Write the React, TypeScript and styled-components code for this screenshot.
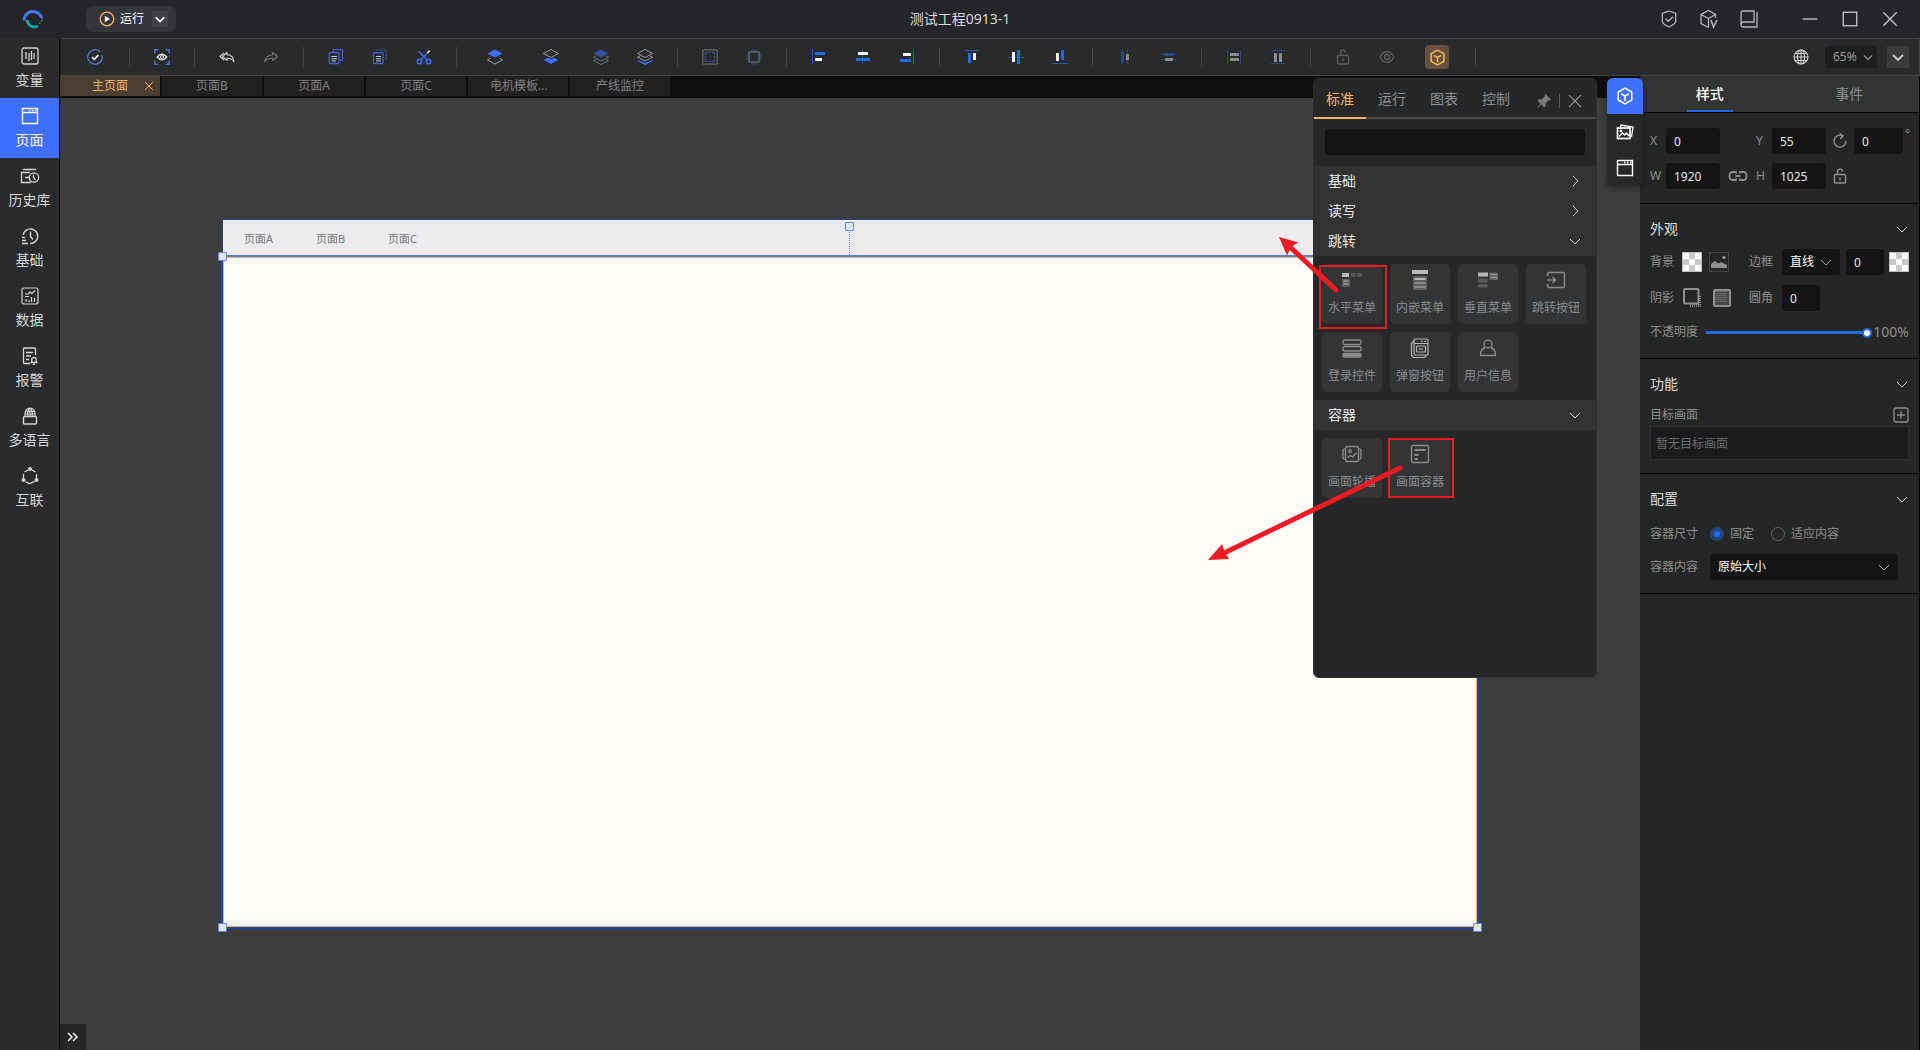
import React, { useState } from "react";
import styled, { createGlobalStyle, css } from "styled-components";

const color = {
  title: "#25252a",
  bar: "#282a2b",
  side: "#2a2b2d",
  panel: "#252726",
  palette: "#262728",
  field: "#141414",
  stage: "#3d3d3d",
  line: "#434444",
  blue: "#3f6fff",
  accent: "#1f6bf0",
  orange: "#ffb464",
  text: "#e3e3e3",
  muted: "#8f8f8f",
  red: "#ed1c24",
};

const GlobalStyle = createGlobalStyle`
  * { box-sizing: border-box; }
  body { margin: 0; background: ${color.stage}; }
  body, button, input, select {
    font-family: "Noto Sans", "Noto Sans CJK SC", sans-serif;
    font-size: 12px;
    line-height: 20px;
  }
  button, input, select { margin: 0; padding: 0; border: 0; background: none; color: inherit; }
  svg { display: block; flex: none; }
`;

/* ---------- icons ---------- */

const Svg = ({ size = 16, box = 16, children, stroke = "currentColor", w = 1 }: any) => (
  <svg width={size} height={size} viewBox={`0 0 ${box} ${box}`} fill="none" stroke={stroke} strokeWidth={w} aria-hidden="true">
    {children}
  </svg>
);

const Chevron = ({ dir = "down", size = 12, w = 1 }: { dir?: "down" | "right"; size?: number; w?: number }) => (
  <Svg size={size} box={12} w={w}>
    <path d={dir === "down" ? "M1 4l5 5 5-5" : "M4 1l5 5-5 5"} />
  </Svg>
);
const Cross = ({ size = 16, w = 1 }: { size?: number; w?: number }) => (
  <Svg size={size} w={w}><path d="M2 2l12 12M14 2L2 14" /></Svg>
);
const Cube = ({ size = 18, w = 1.4 }: { size?: number; w?: number }) => (
  <Svg size={size} w={w}>
    <path d="M8 1l6 3.400v7.200L8 15l-6-3.400V4.400z" strokeLinejoin="round" />
    <path d="M4.500 6L8 8l3.500-2M8 8v4.500" />
  </Svg>
);
const LockOpen = ({ size = 16 }: { size?: number }) => (
  <Svg size={size} w={1.4}>
    <rect x="2.500" y="6.500" width="11" height="8.500" rx="1" />
    <path d="M5.500 6.500V4a2.500 2.500 0 0 1 5-.6M8 9.500v3" />
  </Svg>
);
const WindowIcon = () => (
  <Svg size={18} box={18} w={1.4}>
    <path d="M1.500 1.500h15v15h-15zM1.500 5.500h15" />
    <path d="M8 3.500h1.500M11 3.500h1.500M14 3.500h1.500" />
  </Svg>
);

const sideIcons = {
  variable: (
    <Svg size={18} box={18} w={1.3}><rect x="1" y="1" width="16" height="16" rx="2" /><path d="M5 5v7M8 6v8M10.500 4v9M13 6v6" /></Svg>
  ),
  page: <WindowIcon />,
  history: (
    <Svg size={20} box={20} w={1.3}><path d="M3 3.500h13M10 6.500H1.500v10H11M5 11.500h4" /><circle cx="14" cy="11.500" r="4.700" /><path d="M13.500 8.500v3l2 2.500" /></Svg>
  ),
  base: (
    <Svg size={18} box={18} w={1.4}><path d="M2.200 8a7.300 7.300 0 1 1 7 8.500M9.500 4.500v5l2.500 3M1 10.500h3M1 13.500h4M1 16.500h6" /></Svg>
  ),
  data: (
    <Svg size={18} box={18} w={1.2}><rect x="1" y="1" width="16" height="16" rx="2" /><path d="M4 7h3l2-2 2 1.500 3-3M4 9.500h4M5 15v-3M8 15v-2M10.500 15v-5M13.500 15v-4" /></Svg>
  ),
  alarm: (
    <Svg size={18} box={18} w={1.3}><path d="M14.500 8V2q0-1-1-1h-10q-1 0-1 1v13.500q0 1 1 1H9M5 5.500h7M5 9h5M5 12.500h3" /><path d="M9.500 15.500h7M10.800 15.500v-3a2.200 2.200 0 0 1 4.400 0v3M12 17.500h2" /></Svg>
  ),
  lang: (
    <Svg size={18} box={18} w={1.2}><path d="M4 9V6.500a5 5.500 0 0 1 10 0V9M4.500 4.500h9M9 1v8M6.800 9q-.6-4.500 1.200-8M11.200 9q.6-4.500-1.200-8M4 7h10" /><rect x="2.500" y="9.500" width="13" height="7.500" rx="1" strokeWidth="1.400" /></Svg>
  ),
  link: (
    <Svg size={18} box={18} w={1.3}>
      <path d="M7 3L3.500 5M2.500 7v4.500M4.500 14.500L8 16.500l1.500-.2 4-2M15.500 11.500V7M14.500 5L11 3" />
      <g fill="currentColor" stroke="none"><circle cx="9" cy="2" r="2" /><circle cx="2.500" cy="13" r="2" /><circle cx="15.500" cy="13" r="2" /></g>
    </Svg>
  ),
};

const Bars = ({ lines, a, b, dim }: any) => (
  <svg width="16" height="16" viewBox="0 0 16 16" aria-hidden="true">
    {lines.map((r: number[], i: number) => (
      <rect key={i} x={r[0]} y={r[1]} width={r[2]} height={r[3]} fill={dim ? "#254a8c" : "#2459b8"} />
    ))}
    {a.map((r: number[], i: number) => (
      <rect key={i} x={r[0]} y={r[1]} width={r[2]} height={r[3]} rx="0.500" fill={dim ? "#254a8c" : "#1f6bf0"} />
    ))}
    {b.map((r: number[], i: number) => (
      <rect key={i} x={r[0]} y={r[1]} width={r[2]} height={r[3]} rx="0.500" fill={dim ? "#8c8d8d" : "#fff"} />
    ))}
  </svg>
);

const Layers = ({ top, mid, low, dim }: any) => (
  <Svg size={18} box={18} w={0.9} stroke={dim ? "#757575" : "#a9a9a9"}>
    <path d="M9 1.500l7.500 4L9 9.500l-7.500-4z" fill={top ? (dim ? "#354f9c" : color.blue) : "none"} stroke={top ? "none" : undefined} />
    {mid && <path d="M4 8L1.500 9.200 9 13l7.500-3.800L14 8" />}
    {low === "fill" ? (
      <path d={mid ? "M1.500 12L9 15l7.500-3v1L9 17l-7.500-4z" : "M1.500 12L6 9.800 9 11.200l3-1.400 4.500 2.200L9 16z"} fill={color.blue} stroke="none" />
    ) : (
      <path d={mid ? "M4 11.500L1.500 12.700 9 16.500l7.500-3.800L14 11.500" : "M4.500 10L1.500 12 9 16l7.500-4-3-2"} />
    )}
  </Svg>
);

const tool = {
  check: (
    <Svg w={1.2} stroke="#5b7fdc"><path d="M13 2.800A7.200 7.200 0 1 0 15.200 8q0-1-.4-2.200" /><path d="M5 8l2.300 2.500L11.300 6" stroke="#fff" strokeWidth="1.700" /></Svg>
  ),
  preview: (
    <Svg w={1.5} stroke="#4d70c8"><path d="M.8 4.500V.8h3.700M11.500.8h3.700v3.700M15.200 11.500v3.700h-3.700M4.500 15.200H.8v-3.700" /><g stroke="#e8e8e8" strokeWidth="1.200"><path d="M3.200 8q4.800-5.800 9.600 0-4.800 5.800-9.600 0z" /><circle cx="8" cy="8" r="1.500" /></g></Svg>
  ),
  undo: (
    <Svg w={1.1} stroke="#d6d6d6"><path d="M8 3.500L3.500 7.500 8 11.500V9.300q4.500-.3 7 3.500Q14.500 6 8 5.600zM5 3.800L1 7.500 5 11" strokeLinejoin="round" /></Svg>
  ),
  redo: (
    <Svg w={1.1} stroke="#777"><path d="M9.500 3.500l5 4-5 4V9.300Q4.500 9 1.500 13 2.500 6.500 9.500 5.700z" strokeLinejoin="round" /></Svg>
  ),
  copy: (
    <Svg w={1.2} stroke="#3c66e6"><path d="M5.500 3.500V1.200q0-.7.7-.7h7.600q.7 0 .7.700v9.300q0 .7-.7.700H12" /><rect x="1.200" y="3.700" width="9.800" height="11" rx="1" /><path d="M3.500 7.500H9M3.500 9.800H9M3.500 12H8" stroke="#c4c9d8" strokeWidth="1" /></Svg>
  ),
  paste: (
    <Svg w={1.2} stroke="#3c66e6"><path d="M4.500.9h9.800v10.500" strokeDasharray="2 1.500" stroke="#3454b4" /><rect x="1.500" y="3.700" width="9.500" height="11" rx="1" /><path d="M4 7.500h5M4 9.800h5M4 12h5" stroke="#c4c9d8" strokeWidth="1" /></Svg>
  ),
  cut: (
    <Svg w={1.4} stroke={color.blue}><circle cx="3.500" cy="12.500" r="2.300" /><circle cx="12.500" cy="12.500" r="2.300" /><path d="M2.500 2l8.700 9M4.800 11l6-6.300" /><path d="M11.200 4.300l2.500-2.800" stroke="#eee" /></Svg>
  ),
  top: <Layers top />,
  bottom: <Layers low="fill" />,
  up: <Layers top mid dim />,
  down: <Layers mid low="fill" />,
  group: (
    <Svg stroke="#676969" w={1.2}><rect x=".8" y=".8" width="14.400" height="14.400" rx="1" /><path d="M3.500 6V3.500H6M10 3.500h2.500V6M12.500 10v2.500H10M6 12.500H3.500V10M7 3.500h2M7 12.500h2M3.500 7v2M12.500 7v2" stroke="#34509f" /></Svg>
  ),
  ungroup: (
    <Svg stroke="#717372" w={1.2}><path d="M5 1.500h6M5 14.500h6M1.500 4.500v7M14.500 4.500v7" stroke="#2d3c68" strokeWidth="2.500" /><rect x="3" y="3" width="10" height="10" /></Svg>
  ),
  left: <Bars lines={[[1, 0, 1, 15]]} a={[[4, 3, 10, 3]]} b={[[4, 9, 7, 3]]} />,
  center: <Bars lines={[[7, 0, 1, 15]]} a={[[1, 9, 14, 3]]} b={[[3, 3, 10, 3]]} />,
  right: <Bars lines={[[14, 0, 1, 15]]} a={[[1, 10, 11, 3]]} b={[[4, 4, 8, 3]]} />,
  vtop: <Bars lines={[[1, 1, 14, 1]]} a={[[4, 4, 3, 10]]} b={[[9, 4, 3, 7]]} />,
  vmid: <Bars lines={[[0, 8, 16, 1]]} a={[[9, 1, 3, 14]]} b={[[4, 3, 3, 10]]} />,
  vbot: <Bars lines={[[0, 14, 16, 1]]} a={[[9, 1, 3, 10]]} b={[[4, 4, 3, 8]]} />,
  hdist: <Bars dim lines={[[5, 1, 1, 14], [10, 1, 1, 14]]} a={[[4, 3, 3, 10]]} b={[[9, 5, 3, 6]]} />,
  vdist: <Bars dim lines={[[1, 5, 14, 1], [1, 10, 14, 1]]} a={[[3, 4, 10, 3]]} b={[[4, 9, 8, 3]]} />,
  sameW: <Bars dim lines={[[1, 1, 1, 14], [14, 1, 1, 14]]} a={[]} b={[[4, 4, 9, 3], [4, 9, 9, 3]]} />,
  sameH: <Bars dim lines={[[1, 1, 14, 1], [1, 14, 14, 1]]} a={[]} b={[[4, 4, 3, 9], [9, 4, 3, 9]]} />,
  lock: <LockOpen />,
  eye: (
    <Svg w={1.4}><path d="M1.200 8Q3.500 2.700 8 2.700T14.800 8Q12.500 13.300 8 13.300T1.200 8z" /><circle cx="8" cy="8" r="2.500" /></Svg>
  ),
};

const tileIcon = {
  hmenu: (
    <svg width="20" height="20" viewBox="0 0 20 20"><rect y="3" width="7" height="4" fill="#b9b9b9" /><path d="M9 3h5v4H9zM15 3h5v4h-5z" fill="#555657" /><path d="M0 9h8v8H0z" fill="#5e5f60" /><path d="M1.500 11h5M1.500 14h5" stroke="#979797" strokeWidth="1.500" /></svg>
  ),
  inline: (
    <svg width="20" height="20" viewBox="0 0 20 20"><rect x="2" width="16" height="4" fill="#b9b9b9" /><path d="M3 6h14v14H3z" fill="#5e5f60" /><path d="M4.500 9h11" stroke="#b9b9b9" strokeWidth="2" /><path d="M4.500 13h11M4.500 17h11" stroke="#8a8a8a" strokeWidth="2" /></svg>
  ),
  vmenu: (
    <svg width="20" height="20" viewBox="0 0 20 20"><rect y="2.500" width="10" height="4" fill="#b9b9b9" /><path d="M0 8.500h9.500v4H0zM0 14h9.500v3.500H0z" fill="#585959" /><path d="M11.500 2.500H20V10h-8.500z" fill="#666" /><path d="M12.500 4.500H19M12.500 7.500H19" stroke="#999" /></svg>
  ),
  jump: (
    <Svg size={20} box={20} w={1.5}><path d="M1.500 6V4.500q0-2 2-2h13q2 0 2 2v11q0 2-2 2h-13q-2 0-2-2V14M1.500 10H9M6.500 7L9.500 10l-3 3" /></Svg>
  ),
  login: (
    <Svg size={20} box={20} w={1.3}><rect x="1" y="2" width="18" height="4.500" rx="1.500" /><rect x="1" y="8.500" width="18" height="4.500" rx="1.500" /><rect x="1" y="15.500" width="18" height="3.500" rx="1" fill="currentColor" /></Svg>
  ),
  popup: (
    <Svg size={20} box={20} w={1.2} stroke="#b4b4b4"><path d="M4 2.500L1.500 5.500v12l2 2h11l2-2" /><rect x="4" y="1" width="14" height="16" rx="1" /><path d="M4 5.500h14M11 3.300h1.500M14.500 3.300H16" /><rect x="6.500" y="8" width="9" height="6" rx="1" /><path d="M9 11h4" /></Svg>
  ),
  user: (
    <Svg size={20} box={20} w={1.4}><circle cx="10" cy="6" r="4" /><path d="M7 9.500Q2.500 11.500 2.500 17.500h15q0-6-4.500-8" /></Svg>
  ),
  carousel: (
    <Svg size={20} box={20} w={1.3}><rect x="3.500" y="2.500" width="13" height="15" rx="2" /><path d="M2.500 4.500L1 6v8l1.500 1.500M17.500 4.500L19 6v8l-1.500 1.500M5.500 13.500l3-2 2 1.500 4-4" /><circle cx="8" cy="7" r="1.300" /></Svg>
  ),
  frame: (
    <Svg size={20} box={20} w={1.4}><rect x="1.500" y="1.500" width="17" height="17" rx="1.500" /><path d="M4.500 6h11M4.500 11h4M4.500 15h3.500" strokeWidth="2" /></Svg>
  ),
};

/* ---------- shell ---------- */

const Shell = styled.div`
  display: flex;
  flex-direction: column;
  height: 100vh;
  overflow: hidden;
  color: ${color.text};
  background: ${color.stage};
`;
const Body = styled.div`
  display: flex;
  flex: 1;
  min-height: 0;
`;
const Main = styled.main`
  display: flex;
  flex-direction: column;
  flex: 1;
  min-width: 0;
`;
const Columns = styled.div`
  display: flex;
  flex: 1;
  min-height: 0;
`;

/* ---------- title bar ---------- */

const TitleBar = styled.header`
  display: grid;
  grid-template-columns: 1fr auto 1fr;
  align-items: center;
  height: 38px;
  background: ${color.title};
`;
const TitleLeft = styled.div`
  display: flex;
  align-items: center;
  gap: 42px;
  padding-left: 22px;
`;
const RunGroup = styled.div`
  display: flex;
  align-items: center;
  gap: 8px;
  height: 26px;
  padding: 0 8px 0 13px;
  border-radius: 6px;
  background: #35363a;
`;
const RunButton = styled.button`
  display: flex;
  align-items: center;
  gap: 5px;
  color: #fff;
`;
const RunMore = styled.button`
  display: grid;
  place-items: center;
  width: 16px;
  height: 16px;
  border-radius: 2px;
  background: #424347;
  color: #fff;
`;
const ProjectName = styled.h1`
  margin: 0;
  font-size: 14px;
  font-weight: 400;
  color: #d9d9d9;
`;
const TitleRight = styled.div`
  display: flex;
  justify-content: flex-end;
  gap: 20px;
  padding-right: 20px;
  color: #b5b5b5;
`;
const WindowButtons = styled.div`
  display: flex;
  gap: 20px;
  margin-left: 21px;
  color: #c4c4c4;
`;
const IconButton = styled.button`
  display: grid;
  place-items: center;
  width: 20px;
  height: 20px;
`;

/* ---------- side navigation ---------- */

const SideNav = styled.nav`
  width: 60px;
  flex: none;
  border-right: 1px solid #000;
  background: ${color.side};
`;
const SideItem = styled.button<{ $active?: boolean }>`
  display: flex;
  flex-direction: column;
  align-items: center;
  gap: 4px;
  width: 100%;
  height: 60px;
  padding-top: 8px;
  font-size: 14px;
  color: ${(p) => (p.$active ? "#fff" : "#d6d6d6")};
  background: ${(p) => (p.$active ? color.blue : "none")};
`;
const SideIcon = styled.span`
  display: grid;
  place-items: center;
  height: 20px;
`;

/* ---------- toolbar ---------- */

const ToolBar = styled.div`
  display: flex;
  align-items: center;
  justify-content: space-between;
  height: 38px;
  flex: none;
  padding-right: 10px;
  border: 1px solid ${color.line};
  border-left-color: #1b1b1b;
  background: ${color.bar};
`;
const ToolGroups = styled.div`
  display: flex;
  align-items: center;
`;
const ToolGroup = styled.div`
  display: flex;
  align-items: center;
  height: 20px;
  padding: 0 10px;
  border-right: 1px solid ${color.line};
`;
const ToolButton = styled.button<{ $w?: number; $dim?: boolean }>`
  display: grid;
  place-items: center;
  width: ${(p) => p.$w ?? 44}px;
  height: 24px;
  color: ${(p) => (p.$dim ? "#5c5e5e" : color.text)};
`;
const ActiveMark = styled.span`
  display: grid;
  place-items: center;
  width: 24px;
  height: 24px;
  border-radius: 4px;
  background: #66523c;
  color: ${color.orange};
`;
const ViewTools = styled.div`
  display: flex;
  align-items: center;
  gap: 10px;
`;
const GlobeButton = styled(IconButton)`
  margin-right: 4px;
  color: #d0d0d0;
`;
const MoreButton = styled.button`
  display: grid;
  place-items: center;
  width: 22px;
  height: 22px;
  background: #3a3b3c;
  color: #d0d0d0;
`;

/* ---------- form controls ---------- */

const SelectBox = styled.span<{ $zoom?: boolean }>`
  display: grid;
  align-items: center;
  width: 100%;
  height: ${(p) => (p.$zoom ? 22 : 26)}px;
  border-radius: 3px;
  background: ${(p) => (p.$zoom ? "#1d1e1e" : color.field)};
  color: #a0a0a0;
  > * { grid-area: 1 / 1; }
  > svg { justify-self: end; margin-right: ${(p) => (p.$zoom ? 4 : 8)}px; pointer-events: none; }
  ${(p) => p.$zoom && css`width: 52px;`}
`;
const Select = styled.select<{ $zoom?: boolean }>`
  width: 100%;
  height: 20px;
  padding-left: 8px;
  appearance: none;
  color: ${(p) => (p.$zoom ? "#9a9a9a" : "#fff")};
`;
const Field = styled.input`
  width: 100%;
  min-width: 0;
  height: 26px;
  padding: 0 8px;
  border-radius: 3px;
  background: ${color.field};
  color: #e8e8e8;
  outline: none;
`;

/* ---------- workspace ---------- */

const Workspace = styled.section`
  position: relative;
  z-index: 1;
  display: flex;
  flex-direction: column;
  flex: 1;
  min-width: 0;
`;
const PageTabs = styled.div`
  display: flex;
  gap: 2px;
  height: 22px;
  flex: none;
  padding-bottom: 2px;
  background: #0f0f0f;
`;
const PageTab = styled.div<{ $active?: boolean }>`
  display: grid;
  grid-template-columns: 22px 1fr 22px;
  align-items: center;
  width: 100px;
  height: 20px;
  background: ${(p) => (p.$active ? "#4b3f32" : "#212121")};
  color: ${(p) => (p.$active ? color.orange : "#808080")};
`;
const PageTabLabel = styled.button`
  grid-column: 2;
  white-space: nowrap;
`;
const PageTabClose = styled.button`
  display: grid;
  place-items: center;
  height: 20px;
`;
const Stage = styled.div`
  display: grid;
  place-items: center;
  flex: 1;
  min-height: 0;
  overflow: hidden;
`;
const Artboard = styled.div`
  position: relative;
  display: flex;
  flex-direction: column;
  width: 1256px;
  height: 710px;
  border: 1px dotted #2448c0;
`;
const PageMenu = styled.nav`
  display: flex;
  align-items: center;
  height: 35px;
  padding: 2px 0 0 21px;
  background: #ebebed;
`;
const PageMenuLink = styled.a`
  width: 72px;
  font-size: 11px;
  color: #777;
  text-decoration: none;
`;
const Container = styled.div`
  flex: 1;
  margin: 0 -2px -1px;
  border: 2px solid #1c41b4;
  border-top: 2px solid #5580fb;
  background: #fffcf7;
  box-shadow: inset 0 0 0 1px ${color.orange};
`;
const Handle = styled.span<{ $x: string; $y: string }>`
  position: absolute;
  left: ${(p) => p.$x};
  top: ${(p) => p.$y};
  width: 9px;
  height: 9px;
  margin: -5px 0 0 -5px;
  border: 1px solid #5c85ff;
  border-radius: 1px;
  background: #e3e6f3;
`;
const Guide = styled.span`
  position: absolute;
  left: 50%;
  top: 9px;
  height: 26px;
  margin-left: -1px;
  border-left: 1px dotted #5c85ff;
`;
const ExpandButton = styled.button`
  position: absolute;
  left: 0;
  bottom: 0;
  display: grid;
  place-items: center;
  width: 26px;
  height: 26px;
  background: ${color.panel};
  color: #fff;
`;

/* ---------- floating palette ---------- */

const Palette = styled.aside`
  position: absolute;
  top: 2px;
  right: 43px;
  display: flex;
  flex-direction: column;
  width: 284px;
  height: 600px;
  border: 1px solid #2f3031;
  border-radius: 6px;
  background: ${color.palette};
`;
const PaletteHead = styled.div`
  display: flex;
  align-items: stretch;
  height: 40px;
  box-shadow: inset 0 -2px 0 #4a4a4b;
`;
const PaletteTab = styled.button<{ $active?: boolean }>`
  width: 52px;
  height: 40px;
  padding-top: 2px;
  border-bottom: 2px solid ${(p) => (p.$active ? color.orange : "transparent")};
  font-size: 14px;
  color: ${(p) => (p.$active ? color.orange : color.muted)};
`;
const PaletteActions = styled.div`
  display: flex;
  align-items: center;
  justify-content: space-between;
  flex: 1;
  padding: 3px 11px 0 12px;
  color: ${color.muted};
`;
const Divider = styled.span`
  width: 1px;
  height: 14px;
  background: #5a5a5a;
`;
const PaletteSearch = styled.div`
  padding: 10px 11px 11px;
`;
const GroupHead = styled.button`
  display: flex;
  align-items: center;
  justify-content: space-between;
  width: 100%;
  height: 30px;
  flex: none;
  padding: 0 15px 0 14px;
  background: #323232;
  font-size: 14px;
  color: #e6e6e6;
`;
const Tiles = styled.div`
  display: grid;
  grid-template-columns: repeat(auto-fill, 60px);
  gap: 8px;
  padding: 8px;
`;
const Tile = styled.button`
  display: flex;
  flex-direction: column;
  align-items: center;
  gap: 8px;
  height: 60px;
  padding-top: 6px;
  border-radius: 5px;
  background: #333435;
  color: #8c8c8c;
  white-space: nowrap;
`;
const Callouts = styled.svg`
  position: absolute;
  left: -114px;
  top: 151px;
  pointer-events: none;
`;
const Dock = styled.div`
  position: absolute;
  top: 2px;
  right: -3px;
  display: flex;
  flex-direction: column;
  border-radius: 6px;
  overflow: hidden;
  background: #262829;
  box-shadow: 0 2px 6px rgba(0, 0, 0, 0.35);
`;
const DockButton = styled.button<{ $active?: boolean }>`
  display: grid;
  place-items: center;
  width: 36px;
  height: 36px;
  color: #fff;
  background: ${(p) => (p.$active ? color.blue : "none")};
`;

/* ---------- properties ---------- */

const Props = styled.aside`
  width: 280px;
  flex: none;
  border-right: 1px solid #000;
  background: ${color.panel};
  color: ${color.muted};
`;
const PropTabs = styled.div`
  display: flex;
  height: 37px;
  border-bottom: 1px solid #000;
  background: #323433;
`;
const PropTab = styled.button<{ $active?: boolean }>`
  flex: 1;
  display: flex;
  justify-content: center;
  font-size: 14px;
  color: ${(p) => (p.$active ? "#fff" : color.muted)};
  font-weight: ${(p) => (p.$active ? 500 : 400)};
  > span {
    padding: 8px 9px 6px;
    border-bottom: 2px solid ${(p) => (p.$active ? color.accent : "transparent")};
  }
`;
const Section = styled.section<{ $end?: number }>`
  display: flex;
  flex-direction: column;
  gap: 10px;
  padding: 15px 10px ${(p) => p.$end ?? 15}px;
  border-bottom: 1px solid #000;
`;
const SectionHead = styled.button`
  display: flex;
  align-items: center;
  justify-content: space-between;
  padding-right: 1px;
  font-size: 14px;
  color: #dcdcdc;
`;
const GeometryGrid = styled.div`
  display: grid;
  grid-template-columns: 16px 54px 36px 16px 54px 28px 49px 1fr;
  gap: 9px 0;
  align-items: center;
  justify-items: center;
  > label { justify-self: start; }
`;
const Degree = styled.span`
  align-self: start;
  justify-self: start;
  padding-left: 2px;
  line-height: 12px;
`;
const LookGrid = styled.div`
  display: grid;
  grid-template-columns: 32px 67px 33px 64px 43px 20px;
  gap: 10px 0;
  align-items: center;
`;
const Pair = styled.span<{ $gap: number }>`
  display: flex;
  gap: ${(p) => p.$gap}px;
`;
const Cell = styled.span<{ $w: number }>`
  display: block;
  width: ${(p) => p.$w}px;
`;
const Swatch = styled.button`
  width: 20px;
  height: 20px;
  border: 1px solid #bdbdbd;
  background: repeating-conic-gradient(#c9c9c9 0 25%, #fff 0 50%) 0 0 / 12px 12px;
`;
const PictureButton = styled.button`
  display: grid;
  place-items: center;
  width: 20px;
  height: 20px;
  border: 1px solid #444;
  color: ${color.muted};
`;
const OpacityRow = styled.div`
  display: grid;
  grid-template-columns: 56px 1fr 37px;
  align-items: center;
  height: 22px;
  > output { justify-self: end; font-size: 14px; }
`;
const Slider = styled.input`
  appearance: none;
  width: 166px;
  height: 10px;
  &::-webkit-slider-runnable-track { height: 3px; background: ${color.accent}; }
  &::-webkit-slider-thumb {
    appearance: none;
    width: 10px;
    height: 10px;
    margin-top: -3px;
    border: 2px solid ${color.accent};
    border-radius: 50%;
    background: #fff;
  }
`;
const TargetHead = styled.div`
  display: flex;
  align-items: center;
  justify-content: space-between;
  height: 22px;
`;
const TargetInput = styled.input`
  width: 100%;
  height: 34px;
  padding: 0 5px;
  border: 1px solid #2e302f;
  background: #1a1b1b;
  &::placeholder { color: #6c6c6c; opacity: 1; }
`;
const RadioRow = styled.div`
  display: flex;
  align-items: center;
  height: 30px;
`;
const RadioLabel = styled.label`
  display: flex;
  align-items: center;
  gap: 6px;
  margin-right: 17px;
`;
const Radio = styled.input`
  appearance: none;
  width: 14px;
  height: 14px;
  border: 1px solid #666;
  border-radius: 50%;
  &:checked { border: 4px solid #24437f; background: ${color.accent}; }
`;
const RowLabel = styled.label`
  width: 60px;
`;
const FitRow = styled.div`
  display: flex;
  align-items: center;
  margin-top: 5px;
  padding-right: 11px;
`;
const Grow = styled.span`
  flex: 1;
`;

const SIDE: [keyof typeof sideIcons, string][] = [
  ["variable", "变量"], ["page", "页面"], ["history", "历史库"], ["base", "基础"],
  ["data", "数据"], ["alarm", "报警"], ["lang", "多语言"], ["link", "互联"],
];
type Tool = { k: keyof typeof tool; t: string; w?: number };
const TOOLS: Tool[][] = [
  [{ k: "check", t: "检查", w: 48 }],
  [{ k: "preview", t: "预览" }],
  [{ k: "undo", t: "撤销" }, { k: "redo", t: "重做" }],
  [{ k: "copy", t: "复制" }, { k: "paste", t: "粘贴" }, { k: "cut", t: "剪切" }],
  [{ k: "top", t: "置顶", w: 56 }, { k: "bottom", t: "置底", w: 56 }, { k: "up", t: "上移" }, { k: "down", t: "下移" }],
  [{ k: "group", t: "组合" }, { k: "ungroup", t: "取消组合" }],
  [{ k: "left", t: "左对齐" }, { k: "center", t: "水平居中" }, { k: "right", t: "右对齐" }],
  [{ k: "vtop", t: "顶对齐" }, { k: "vmid", t: "垂直居中" }, { k: "vbot", t: "底对齐" }],
  [{ k: "hdist", t: "水平分布" }, { k: "vdist", t: "垂直分布" }],
  [{ k: "sameW", t: "等宽" }, { k: "sameH", t: "等高" }],
];
const TABS = ["主页面", "页面B", "页面A", "页面C", "电机模板...", "产线监控"];
const JUMP: [keyof typeof tileIcon, string][] = [
  ["hmenu", "水平菜单"], ["inline", "内嵌菜单"], ["vmenu", "垂直菜单"], ["jump", "跳转按钮"],
  ["login", "登录控件"], ["popup", "弹窗按钮"], ["user", "用户信息"],
];
const BOX: [keyof typeof tileIcon, string][] = [["carousel", "画面轮播"], ["frame", "画面容器"]];

const TileGrid = ({ items }: { items: [keyof typeof tileIcon, string][] }) => (
  <Tiles>
    {items.map(([icon, name]) => (
      <Tile key={name}>{tileIcon[icon]}<span>{name}</span></Tile>
    ))}
  </Tiles>
);

const Header = () => (
  <TitleBar>
    <TitleLeft>
      <svg width="22" height="22" viewBox="0 0 22 22" fill="none" aria-hidden="true">
        <path d="M2 12.500A9 9 0 0 1 19.500 9.500" stroke="#3f7df6" strokeWidth="3" />
        <path d="M19.500 9l1 2.500" stroke="#3f7df6" strokeWidth="1.500" />
        <path d="M5 12a7.500 7.500 0 0 0 11 6" stroke="#14a99a" strokeWidth="3" />
        <path d="M17.500 16l.6-.8M19.300 13.500l.4-1" stroke="#14a99a" strokeWidth="2" />
      </svg>
      <RunGroup>
        <RunButton>
          <Svg stroke={color.orange} w={1.3}><circle cx="8" cy="8" r="6.800" /><path d="M5.800 4.800v6.400L11 8z" fill="#fff" stroke="none" /></Svg>
          运行
        </RunButton>
        <RunMore aria-label="运行选项"><Chevron size={10} w={2} /></RunMore>
      </RunGroup>
    </TitleLeft>
    <ProjectName>测试工程0913-1</ProjectName>
    <TitleRight>
      <IconButton aria-label="安全"><Svg size={18} box={18} w={1.3}><path d="M9 1l6.700 2.500V11q0 3-6.700 6-6.700-3-6.700-6V3.500z" /><path d="M5.500 8.500L8.300 11.300l4.500-4.500" /></Svg></IconButton>
      <IconButton aria-label="版本"><Svg size={20} box={20} w={1.3}><path d="M16.500 9V5.500L9.500 1.500 2 5.500v9l7.500 4M2.500 5.700L9.500 9.500l6.800-3.800M9.500 9.500v9" /><path d="M12 11l2.500 7 3.500-7" strokeWidth="1.600" /></Svg></IconButton>
      <IconButton aria-label="文档"><Svg size={20} box={20} w={1.3}><path d="M2 16V3.500q0-1.500 1.500-1.500H15v11H4.500Q2 13 2 15.500T4.500 18H18V3" /></Svg></IconButton>
      <WindowButtons>
        <IconButton aria-label="最小化"><Svg size={18} w={1.2}><path d="M1.500 8h13" /></Svg></IconButton>
        <IconButton aria-label="最大化"><Svg size={18} w={1.2}><rect x="2" y="2" width="12" height="12" /></Svg></IconButton>
        <IconButton aria-label="关闭"><Cross size={18} w={1.2} /></IconButton>
      </WindowButtons>
    </TitleRight>
  </TitleBar>
);

const Tools = () => (
  <ToolBar>
    <ToolGroups>
      {TOOLS.map((group, i) => (
        <ToolGroup key={i}>
          {group.map((b) => (
            <ToolButton key={b.k} $w={b.w} aria-label={b.t}>{tool[b.k]}</ToolButton>
          ))}
        </ToolGroup>
      ))}
      <ToolGroup>
        <ToolButton $dim aria-label="锁定">{tool.lock}</ToolButton>
        <ToolButton $dim aria-label="显示">{tool.eye}</ToolButton>
        <ToolButton $w={56} aria-label="组件库"><ActiveMark><Cube size={17} /></ActiveMark></ToolButton>
      </ToolGroup>
    </ToolGroups>
    <ViewTools>
      <GlobeButton aria-label="语言"><Svg w={1.1}><circle cx="8" cy="8" r="7" /><ellipse cx="8" cy="8" rx="3.500" ry="7" /><path d="M1 8h14M8 1v14M2 4.500h12M2 11.500h12" /></Svg></GlobeButton>
      <SelectBox $zoom>
        <Select $zoom aria-label="缩放" defaultValue="65"><option value="65">65%</option><option value="100">100%</option></Select>
        <Chevron size={10} w={1.3} />
      </SelectBox>
      <MoreButton aria-label="更多"><Chevron w={1.8} /></MoreButton>
    </ViewTools>
  </ToolBar>
);

const PalettePanel = () => (
  <Palette>
    <PaletteHead>
      {["标准", "运行", "图表", "控制"].map((t, i) => (
        <PaletteTab key={t} $active={i === 0}>{t}</PaletteTab>
      ))}
      <PaletteActions>
        <IconButton aria-label="固定面板">
          <svg width="16" height="16" viewBox="0 0 16 16" fill="#7c7d7e"><path d="M9.500 1L15 6.500l-1.500 1-1-.3-3 3.300.2 2.500-1.500 1.500-3-3L1.500 15 1 14.500 4.500 10.800l-3-3L3 6.300l2.500.2L8.800 3.500l-.3-1z" /></svg>
        </IconButton>
        <Divider />
        <IconButton aria-label="关闭面板"><Cross w={1.2} /></IconButton>
      </PaletteActions>
    </PaletteHead>
    <PaletteSearch><Field aria-label="搜索组件" /></PaletteSearch>
    <GroupHead>基础<Chevron dir="right" /></GroupHead>
    <GroupHead>读写<Chevron dir="right" /></GroupHead>
    <GroupHead>跳转<Chevron /></GroupHead>
    <TileGrid items={JUMP} />
    <GroupHead>容器<Chevron /></GroupHead>
    <TileGrid items={BOX} />
    <Callouts width="260" height="340" viewBox="1200 230 260 340" fill="none" stroke={color.red} aria-hidden="true">
      <rect x="1320" y="266" width="66" height="62" strokeWidth="2" />
      <rect x="1389" y="439" width="64" height="58" strokeWidth="2" />
      <path d="M1336 290L1289 246M1400 468L1222 554" strokeWidth="5" strokeLinecap="round" />
      <path d="M1208 560l14-16 3 9 4 6z" fill={color.red} stroke="none" />
      <path d="M1279 237l19.500 5.500-7 4-4.500 9z" fill={color.red} stroke="none" />
    </Callouts>
  </Palette>
);

const Properties = () => {
  const [size, setSize] = useState("fixed");
  return (
    <Props>
      <PropTabs>
        <PropTab $active><span>样式</span></PropTab>
        <PropTab><span>事件</span></PropTab>
      </PropTabs>
      <Section $end={14}>
        <GeometryGrid>
          <label htmlFor="x">X</label><Field id="x" defaultValue="0" /><span />
          <label htmlFor="y">Y</label><Field id="y" defaultValue="55" />
          <Svg w={1.4}><path d="M10.500 2.700A6 6 0 1 0 14 8M7.500.5l3.500 2.300L8.500 6" /></Svg>
          <Field aria-label="旋转" defaultValue="0" /><Degree>°</Degree>
          <label htmlFor="w">W</label><Field id="w" defaultValue="1920" />
          <svg width="20" height="12" viewBox="0 0 20 12" fill="none" stroke="currentColor" strokeWidth="1.800"><path d="M8 8.500V10H4.500Q1.500 10 1.500 6t3-4H8v1.500M12 8.500V10h3.500q3 0 3-4t-3-4H12v1.500M7.500 6h5" /></svg>
          <label htmlFor="h">H</label><Field id="h" defaultValue="1025" />
          <LockOpen />
        </GeometryGrid>
      </Section>
      <Section>
        <SectionHead>外观<Chevron /></SectionHead>
        <LookGrid>
          <span>背景</span>
          <Pair $gap={7}>
            <Swatch aria-label="背景颜色" />
            <PictureButton aria-label="背景图片"><Svg><path d="M0 14v-4l4-3 3 2.500L10 8l6 3v3z" fill="currentColor" stroke="none" /><circle cx="13" cy="3.500" r="1.700" fill="currentColor" stroke="none" /></Svg></PictureButton>
          </Pair>
          <label htmlFor="border">边框</label>
          <Cell $w={58}><SelectBox><Select id="border"><option>直线</option></Select><Chevron /></SelectBox></Cell>
          <Cell $w={38}><Field aria-label="边框宽度" defaultValue="0" /></Cell>
          <Swatch aria-label="边框颜色" />
          <span>阴影</span>
          <Pair $gap={10}>
            <IconButton aria-label="外阴影"><Svg size={20} box={20}><path d="M8 17.500h10.500M17.500 8v10.500" stroke="#858585" strokeWidth="3" strokeDasharray="1 1" /><rect x="2" y="1" width="14.500" height="14.500" rx="1" strokeWidth="2" fill={color.panel} /></Svg></IconButton>
            <IconButton aria-label="内阴影"><Svg size={20} box={20}><rect x="2" y="2" width="16" height="16" rx="1" strokeWidth="2" fill="#484949" /><path d="M4 3v12M6 3v12M8 3v12M10 3v12M12 3v12M14 3v12" stroke="#858585" strokeDasharray="1 1" /></Svg></IconButton>
          </Pair>
          <label htmlFor="radius">圆角</label>
          <Cell $w={38}><Field id="radius" defaultValue="0" /></Cell>
        </LookGrid>
        <OpacityRow>
          <label htmlFor="opacity">不透明度</label>
          <Slider id="opacity" type="range" defaultValue={100} />
          <output>100%</output>
        </OpacityRow>
      </Section>
      <Section $end={13}>
        <SectionHead>功能<Chevron /></SectionHead>
        <div>
          <TargetHead>
            <label htmlFor="target">目标画面</label>
            <button aria-label="添加目标画面"><Svg w={1.3}><rect x="1" y="1" width="14" height="14" rx="2" /><path d="M8 4v8M4 8h8" /></Svg></button>
          </TargetHead>
          <TargetInput id="target" placeholder="暂无目标画面" />
        </div>
      </Section>
      <Section $end={13}>
        <SectionHead>配置<Chevron /></SectionHead>
        <div>
          <RadioRow role="radiogroup" aria-label="容器尺寸">
            <RowLabel as="span">容器尺寸</RowLabel>
            <RadioLabel><Radio type="radio" name="size" checked={size === "fixed"} onChange={() => setSize("fixed")} />固定</RadioLabel>
            <RadioLabel><Radio type="radio" name="size" checked={size === "fit"} onChange={() => setSize("fit")} />适应内容</RadioLabel>
          </RadioRow>
          <FitRow>
            <RowLabel htmlFor="content">容器内容</RowLabel>
            <Grow><SelectBox><Select id="content"><option>原始大小</option></Select><Chevron /></SelectBox></Grow>
          </FitRow>
        </div>
      </Section>
    </Props>
  );
};

export default function App() {
  return (
    <Shell>
      <GlobalStyle />
      <Header />
      <Body>
        <SideNav>
          {SIDE.map(([icon, name]) => (
            <SideItem key={icon} $active={icon === "page"}>
              <SideIcon>{sideIcons[icon]}</SideIcon>
              {name}
            </SideItem>
          ))}
        </SideNav>
        <Main>
          <Tools />
          <Columns>
            <Workspace>
              <PageTabs>
                {TABS.map((t, i) => (
                  <PageTab key={t} $active={i === 0}>
                    <PageTabLabel>{t}</PageTabLabel>
                    {i === 0 && <PageTabClose aria-label="关闭页面"><Cross size={10} w={1.6} /></PageTabClose>}
                  </PageTab>
                ))}
              </PageTabs>
              <Stage>
                <Artboard>
                  <PageMenu>
                    {["页面A", "页面B", "页面C"].map((t) => (
                      <PageMenuLink key={t} href="#">{t}</PageMenuLink>
                    ))}
                  </PageMenu>
                  <Container />
                  <Guide />
                  <Handle $x="50%" $y="7px" />
                  <Handle $x="0px" $y="37px" />
                  <Handle $x="0px" $y="100%" />
                  <Handle $x="calc(100% + 1px)" $y="100%" />
                </Artboard>
              </Stage>
              <ExpandButton aria-label="展开">
                <Svg size={12} box={12} w={1.4}><path d="M1 2l4 4-4 4M6 2l4 4-4 4" /></Svg>
              </ExpandButton>
              <PalettePanel />
              <Dock>
                <DockButton $active aria-label="组件"><Cube /></DockButton>
                <DockButton aria-label="图片">
                  <Svg size={18} box={18} w={1.3}><path d="M4.500 4.500L5 2l12 2-1.500 10" /><rect x="1.500" y="5" width="12.500" height="10.500" strokeWidth="1.700" /><path d="M3 13.500l3.500-3.500 2 2L10.500 10l2.500 3" /><circle cx="5" cy="8" r=".8" /></Svg>
                </DockButton>
                <DockButton aria-label="窗口"><WindowIcon /></DockButton>
              </Dock>
            </Workspace>
            <Properties />
          </Columns>
        </Main>
      </Body>
    </Shell>
  );
}
